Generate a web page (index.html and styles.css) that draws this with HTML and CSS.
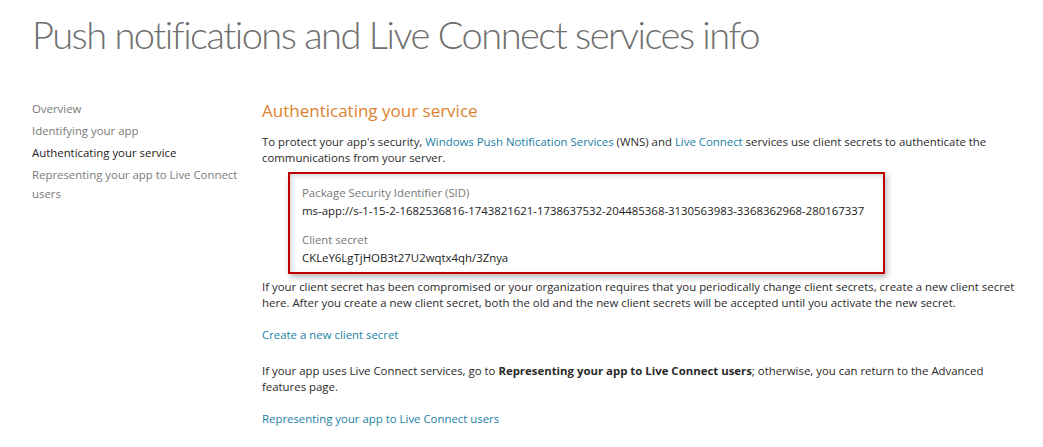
FILE: index.html
```html
<!DOCTYPE html>
<html lang="en">
<head>
<meta charset="utf-8">
<title>Push notifications and Live Connect services info</title>
<link rel="stylesheet" href="styles.css">
</head>
<body>
<div class="page">
  <h1 class="title">Push notifications and Live Connect services info</h1>
  <div class="layout">
    <nav class="sidenav">
      <a class="nav-item" href="#">Overview</a>
      <a class="nav-item" href="#">Identifying your app</a>
      <a class="nav-item active" href="#">Authenticating your service</a>
      <a class="nav-item" href="#">Representing your app to Live Connect users</a>
    </nav>
    <main class="content">
      <h2 class="section-title">Authenticating your service</h2>
      <p class="para">To protect your app's security, <a class="link" href="#">Windows Push Notification Services</a> (WNS) and <a class="link" href="#">Live Connect</a> services use client secrets to authenticate the communications from your server.</p>
      <div class="secret-box">
        <div class="field">
          <div class="field-label">Package Security Identifier (SID)</div>
          <div class="field-value">ms-app://s-1-15-2-1682536816-1743821621-1738637532-204485368-3130563983-3368362968-280167337</div>
        </div>
        <div class="field">
          <div class="field-label">Client secret</div>
          <div class="field-value">CKLeY6LgTjHOB3t27U2wqtx4qh/3Znya</div>
        </div>
      </div>
      <p class="para">If your client secret has been compromised or your organization requires that you periodically change client secrets, create a new client secret here. After you create a new client secret, both the old and the new client secrets will be accepted until you activate the new secret.</p>
      <p class="para para-link"><a class="link" href="#">Create a new client secret</a></p>
      <p class="para">If your app uses Live Connect services, go to <b>Representing your app to Live Connect users</b>; otherwise, you can return to the Advanced features page.</p>
      <p class="para"><a class="link" href="#">Representing your app to Live Connect users</a></p>
    </main>
  </div>
</div>
</body>
</html>
```
FILE: styles.css
```css
html, body {
  margin: 0;
  padding: 0;
  background: #ffffff;
}
body {
  font-family: "Open Sans", "Noto Sans", "Liberation Sans", sans-serif;
  font-size: 11.4px;
  color: #2a2a2a;
}
.page {
  padding: 0 0 0 32px;
}
.title {
  margin: 0;
  padding-top: 10px;
  font-family: Lato, "Open Sans", sans-serif;
  font-size: 38px;
  font-weight: 300;
  color: #6e6e6e;
  line-height: 48px;
  letter-spacing: -1.5px;
}
.layout {
  display: grid;
  grid-template-columns: 230px 1fr;
  margin-top: 42px;
}
.sidenav {
  display: flex;
  flex-direction: column;
  align-items: flex-start;
  gap: 3px;
  width: 212px;
  margin-top: -1px;
}
.nav-item {
  color: #7a7a7a;
  text-decoration: none;
  line-height: 19px;
}
.nav-item.active {
  color: #222;
}
.content {
  width: 762px;
}
.section-title {
  margin: 0 0 12px 0;
  font-size: 17px;
  font-weight: 400;
  color: #dd8230;
  line-height: 22px;
}
.para {
  margin: 0 0 16px 0;
  line-height: 16px;
}
.para-link {
  margin-bottom: 20px;
}
.link {
  color: #1a7fa6;
  text-decoration: none;
}
.secret-box {
  width: 569px;
  margin: -10px 0 5px 26px;
  padding: 10px 12px 5px 12px;
  border: 2px solid #c00000;
  box-shadow: 2px 3px 6px rgba(0,0,0,0.28), inset 2px 2px 5px rgba(0,0,0,0.16);
}
.field {
  margin-bottom: 11px;
}
.field:last-child {
  margin-bottom: 0;
}
.field-label {
  color: #777;
  line-height: 18px;
}
.field-value {
  color: #222;
  line-height: 18px;
  white-space: nowrap;
}
```
